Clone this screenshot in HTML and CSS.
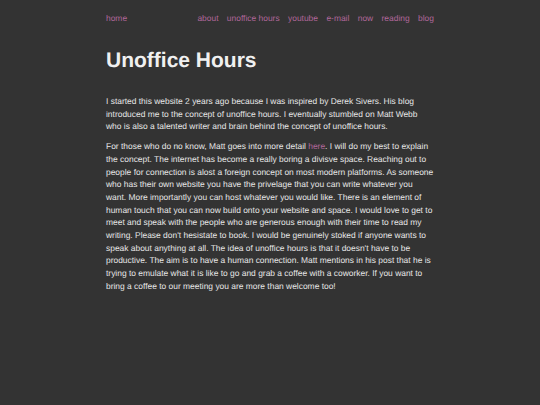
FILE: index.html
```html
<!DOCTYPE html>
<html lang="en">
<head>
<meta charset="utf-8">
<title>Unoffice Hours</title>
<link rel="stylesheet" href="styles.css">
</head>
<body>
<div class="page">
  <nav class="nav">
    <a href="#" class="home">home</a>
    <div class="links">
      <a href="#">about</a>
      <a href="#">unoffice hours</a>
      <a href="#">youtube</a>
      <a href="#">e-mail</a>
      <a href="#">now</a>
      <a href="#">reading</a>
      <a href="#">blog</a>
    </div>
  </nav>
  <h1 class="title">Unoffice Hours</h1>
  <p class="text">I started this website 2 years ago because I was inspired by Derek Sivers. His blog introduced me to the concept of unoffice hours. I eventually stumbled on Matt Webb who is also a talented writer and brain behind the concept of unoffice hours.</p>
  <p class="text">For those who do no know, Matt goes into more detail <a href="#">here</a>. I will do my best to explain the concept. The internet has become a really boring a divisve space. Reaching out to people for connection is alost a foreign concept on most modern platforms. As someone who has their own website you have the privelage that you can write whatever you want. More importantly you can host whatever you would like. There is an element of human touch that you can now build onto your website and space. I would love to get to meet and speak with the people who are generous enough with their time to read my writing. Please don't hesistate to book. I would be genuinely stoked if anyone wants to speak about anything at all. The idea of unoffice hours is that it doesn't have to be productive. The aim is to have a human connection. Matt mentions in his post that he is trying to emulate what it is like to go and grab a coffee with a coworker. If you want to bring a coffee to our meeting you are more than welcome too!</p>
</div>
</body>
</html>
```
FILE: styles.css
```css
html, body {
  margin: 0;
  padding: 0;
  background: #333333;
}
body {
  font-family: "Liberation Sans", Arial, sans-serif;
  color: #e6e6e6;
  text-rendering: geometricPrecision;
}
a {
  color: #b0679a;
  text-decoration: none;
}
.page {
  width: 328px;
  margin: 0 auto;
  padding-top: 12px;
}
.nav {
  display: flex;
  justify-content: space-between;
  font-size: 8.43px;
  line-height: 12px;
}
.links {
  display: flex;
  gap: 8.4px;
}
.title {
  font-size: 21px;
  font-weight: bold;
  line-height: 24px;
  margin: 25px 0 0;
  color: #f0f0f0;
}
.text {
  font-size: 8.43px;
  line-height: 12.7px;
  margin: 22px 0 0;
}
.text + .text {
  margin-top: 7px;
}
```
